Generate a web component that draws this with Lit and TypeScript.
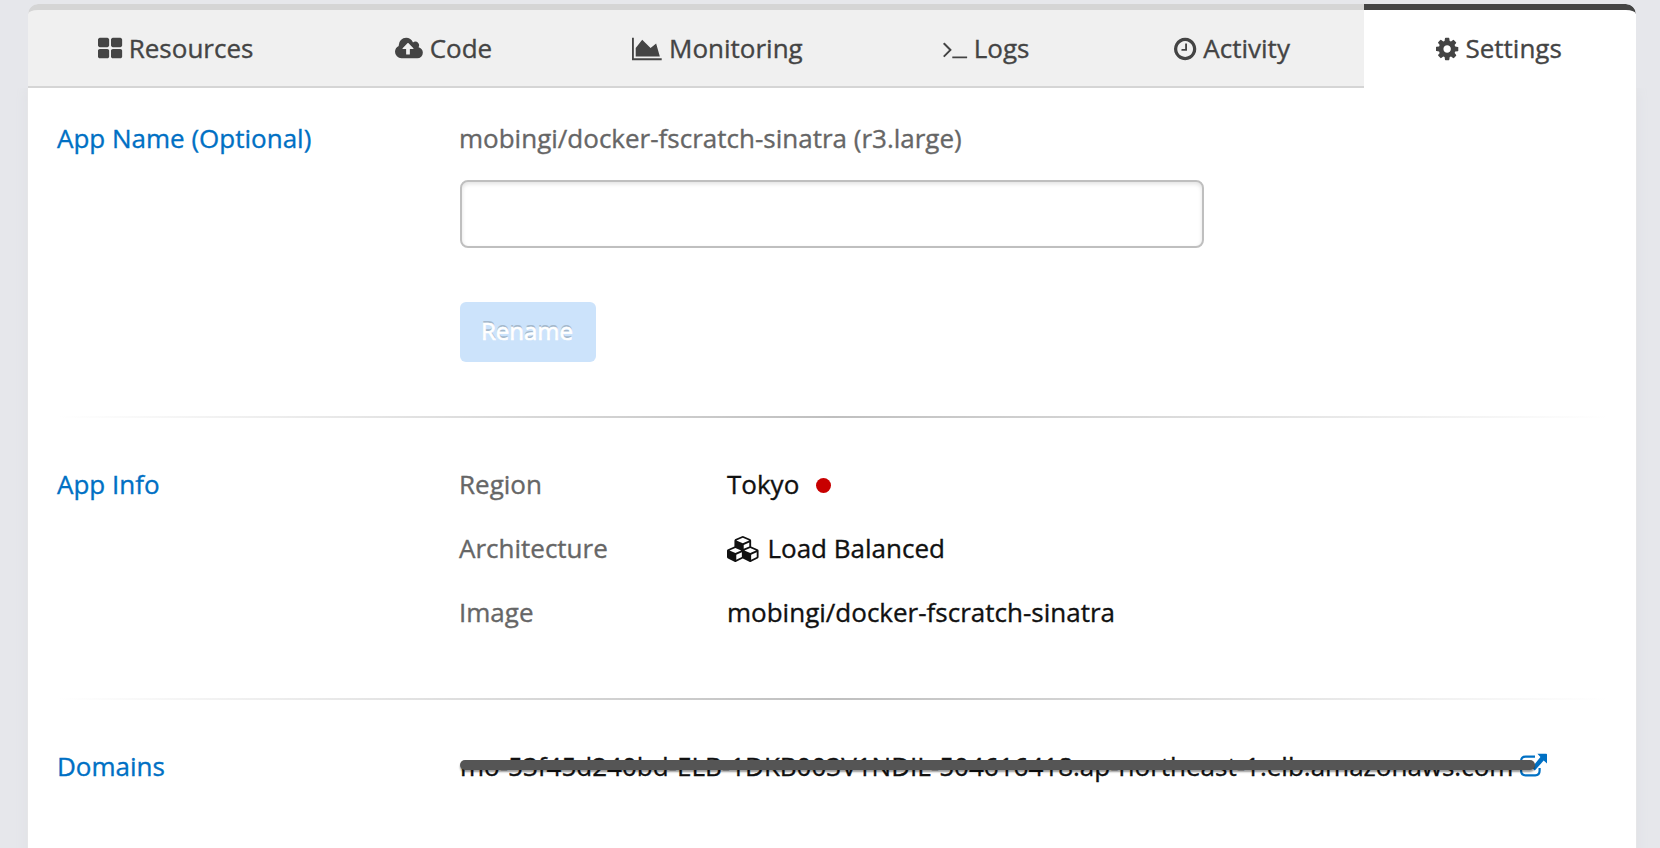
import { LitElement, html, css, svg } from "lit";
import { customElement } from "lit/decorators.js";

// Glyph outlines are stored in font units with the y axis pointing up.
const glyph = (name: string, w: number, units: number, em: number, d: unknown) =>
  html`<svg class="icon ${name}" viewBox="0 ${-units} ${w} ${em}" aria-hidden="true">
    <g transform="scale(1,-1)">${d}</g>
  </svg>`;

const thLarge = glyph("grid", 1664, 1536, 1792, svg`<path d="M768 512v-384q0 -52 -38 -90t-90 -38h-512q-52 0 -90 38t-38 90v384q0 52 38 90t90 38h512q52 0 90 -38t38 -90zM768 1280v-384q0 -52 -38 -90t-90 -38h-512q-52 0 -90 38t-38 90v384q0 52 38 90t90 38h512q52 0 90 -38t38 -90zM1664 512v-384q0 -52 -38 -90t-90 -38h-512q-52 0 -90 38t-38 90v384q0 52 38 90t90 38h512q52 0 90 -38t38 -90zM1664 1280v-384q0 -52 -38 -90t-90 -38h-512q-52 0 -90 38t-38 90v384q0 52 38 90t90 38h512q52 0 90 -38t38 -90z"/>`);
const cloudUpload = glyph("cloud", 1920, 1536, 1792, svg`<path d="M1280 672q0 14 -9 23l-352 352q-9 9 -23 9t-23 -9l-351 -351q-10 -12 -10 -24q0 -14 9 -23t23 -9h224v-352q0 -13 9.5 -22.5t22.5 -9.5h192q13 0 22.5 9.5t9.5 22.5v352h224q13 0 22.5 9.5t9.5 22.5zM1920 384q0 -159 -112.5 -271.5t-271.5 -112.5h-1088q-185 0 -316.5 131.5t-131.5 316.5q0 130 70 240t188 165q-2 30 -2 43q0 212 150 362t362 150q156 0 285.5 -87t188.5 -231q71 62 166 62q106 0 181 -75t75 -181q0 -76 -41 -138q130 -31 213.5 -135.5t83.5 -238.5z"/>`);
const areaChart = glyph("chart", 2048, 1536, 1792, svg`<path d="M2048 0v-128h-2048v1536h128v-1408h1920zM1664 1024l256 -896h-1664v576l448 576l576 -576z"/>`);
const terminal = glyph("terminal", 1664, 1536, 1792, svg`<path d="M585 553l-466 -466q-10 -10 -23 -10t-23 10l-50 50q-10 10 -10 23t10 23l393 393l-393 393q-10 10 -10 23t10 23l50 50q10 10 23 10t23 -10l466 -466q10 -10 10 -23t-10 -23zM1664 96v-64q0 -14 -9 -23t-23 -9h-960q-14 0 -23 9t-9 23v64q0 14 9 23t23 9h960q14 0 23 -9t9 -23z"/>`);
const clock = glyph("clock", 1536, 1536, 1792, svg`<path d="M896 992v-448q0 -14 -9 -23t-23 -9h-320q-14 0 -23 9t-9 23v64q0 14 9 23t23 9h224v352q0 14 9 23t23 9h64q14 0 23 -9t9 -23zM1312 640q0 148 -73 273t-198 198t-273 73t-273 -73t-198 -198t-73 -273t73 -273t198 -198t273 -73t273 73t198 198t73 273zM1536 640q0 -209 -103 -385.5t-279.5 -279.5t-385.5 -103t-385.5 103t-279.5 279.5t-103 385.5t103 385.5t279.5 279.5t385.5 103t385.5 -103t279.5 -279.5t103 -385.5z"/>`);
const gear = glyph("gear", 1536, 1536, 1792, svg`<path d="M1024 640q0 106 -75 181t-181 75t-181 -75t-75 -181t75 -181t181 -75t181 75t75 181zM1536 749v-222q0 -12 -8 -23t-20 -13l-185 -28q-19 -54 -39 -91q35 -50 107 -138q10 -12 10 -25t-9 -23q-27 -37 -99 -108t-94 -71q-12 0 -26 9l-138 108q-44 -23 -91 -38q-16 -136 -29 -186q-7 -28 -36 -28h-222q-14 0 -24.5 8.5t-11.5 21.5l-28 184q-49 16 -90 37l-141 -107q-10 -9 -25 -9q-14 0 -25 11q-126 114 -165 168q-7 10 -7 23q0 12 8 23q15 21 51 66.5t54 70.5q-27 50 -41 99l-183 27q-13 2 -21 12.5t-8 23.5v222q0 12 8 23t19 13l186 28q14 46 39 92q-40 57 -107 138q-10 12 -10 24q0 10 9 23q26 36 98.5 107.5t94.5 71.5q13 0 26 -10l138 -107q44 23 91 38q16 136 29 186q7 28 36 28h222q14 0 24.5 -8.5t11.5 -21.5l28 -184q49 -16 90 -37l142 107q9 9 24 9q13 0 25 -10q129 -119 165 -170q7 -8 7 -22q0 -12 -8 -23q-15 -21 -51 -66.5t-54 -70.5q26 -50 41 -98l183 -28q13 -2 21 -12.5t8 -23.5z"/>`);
const cubes = glyph("cubes", 2304, 1536, 1792, svg`<path d="M640 -96l384 192v314l-384 -164v-342zM576 358l404 173l-404 173l-404 -173zM1664 -96l384 192v314l-384 -164v-342zM1600 358l404 173l-404 173l-404 -173zM1152 651l384 165v266l-384 -164v-267zM1088 1030l441 189l-441 189l-441 -189zM2176 512v-416q0 -36 -19 -67t-52 -47l-448 -224q-25 -14 -57 -14t-57 14l-448 224q-5 2 -7 4q-2 -2 -7 -4l-448 -224q-25 -14 -57 -14t-57 14l-448 224q-33 16 -52 47t-19 67v416q0 38 21.5 70t56.5 48l434 186v400q0 38 21.5 70t56.5 48l448 192q23 10 50 10t50 -10l448 -192q35 -16 56.5 -48t21.5 -70v-400l434 -186q36 -16 57 -48t21 -70z"/>`);
const external = html`<svg class="icon external" viewBox="0 0 27 26" aria-hidden="true">
  <path d="M15 3.6H5.6Q1.1 3.6 1.1 8.1V17.8Q1.1 22.3 5.6 22.3H15.2Q19.6 22.3 19.6 17.8V15" fill="none" stroke="currentColor" stroke-width="2.2"/>
  <path d="M17.4 .7H26.2Q27 .7 27 1.5V10.6L23.7 7.6L14.8 17.4L11.8 14.8L20.4 4Z"/>
</svg>`;

const TABS = [
  { label: "Resources", icon: thLarge, size: "w-resources" },
  { label: "Code", icon: cloudUpload, size: "w-code" },
  { label: "Monitoring", icon: areaChart, size: "w-monitoring" },
  { label: "Logs", icon: terminal, size: "w-logs" },
  { label: "Activity", icon: clock, size: "w-activity" },
  { label: "Settings", icon: gear, size: "w-settings active" },
];

@customElement("app-root")
export class AppRoot extends LitElement {
  static styles = css`
    :host {
      display: block;
      box-sizing: border-box;
      height: 848px;
      overflow: hidden;
      padding: 4px 24px 0 28px;
      background: #e6e7eb;
      font: 26px/36px "Open Sans", sans-serif;
      color: #111;
      -webkit-text-stroke: 0.35px;
    }
    * { box-sizing: border-box; }
    .icon { display: inline-block; flex: none; height: 26px; margin-top: 1px; fill: currentColor; overflow: visible; }
    .tabs { display: flex; height: 84px; color: #444; border-radius: 10px 10px 0 0; overflow: hidden; }
    .tab {
      display: flex; align-items: center; justify-content: center; gap: 7px;
      padding-right: 1px;
      border-top: 6px solid #d5d5d5; border-bottom: 2px solid #d5d5d5; background: #f0f0f0;
      white-space: nowrap;
    }
    .tab:first-child { border-top-left-radius: 10px; }
    .active { border-top-color: #444; border-bottom: 0; padding: 0 2px 2px 0; background: #fff; border-top-right-radius: 10px; }
    .w-resources { width: 296px; }
    .w-code { width: 240px; }
    .w-monitoring { width: 308px; }
    .w-logs { width: 229px; }
    .w-activity { width: 263px; }
    .w-settings { width: 272px; }
    .panel { height: 780px; background: #fff; box-shadow: 0 0 0 1px #e6e6e8, 0 0 12px #dddee3; padding: 32px 28px 0 29px; clip-path: inset(0 -14px); }
    .section { display: grid; grid-template-columns: 402px 1fr; }
    .heading { margin: 0; font: inherit; color: #0070c4; }
    .muted { color: #666; }
    .field { display: block; width: 744px; height: 68px; margin: 24px 0 0 1px; border: 2px solid #bfbfbf; border-radius: 8px; background: #fff; box-shadow: inset 0 2px 4px #e2e2e2; }
    .rename { display: block; width: 136px; height: 60px; margin: 54px 0 0 1px; padding: 0 2px 3px 0; border: 0; border-radius: 6px; background: #cce3fb; color: #fff; font: 24px/36px "Open Sans", sans-serif; text-shadow: 0 -2px 0 #a5b9cc; -webkit-text-stroke: 0.7px #fff; }
    .rule { height: 2px; margin: 54px 0 48px; background: linear-gradient(90deg, transparent, #bfbfbf 50%, transparent); }
    .facts { display: grid; grid-template-columns: 268px 1fr; row-gap: 28px; margin: 0; }
    .facts dd { margin: 0; display: flex; align-items: center; }
    .dot { width: 15px; height: 15px; border-radius: 50%; background: #c80000; margin: 2px 0 0 17px; }
    .cubes { margin: 1px 7px 0 0; }
    .rule.second { margin: 68px 0 48px; }
    .domain { position: relative; display: flex; align-items: flex-start; white-space: nowrap; width: max-content; margin-left: 1px; }
    .external { width: 27px; height: 26px; margin: 5px 0 0 7px; color: #0070c4; }
    .strike { position: absolute; left: -0.5px; top: 12px; width: 1075px; height: 10px; border-radius: 5px; background: #555; box-shadow: 0 2px 2px #0006; }
  `;

  render() {
    return html`
      <nav class="tabs">
        ${TABS.map((t) => html`<div class="tab ${t.size}">${t.icon}<span>${t.label}</span></div>`)}
      </nav>
      <main class="panel">
        <section class="section">
          <h2 class="heading">App Name (Optional)</h2>
          <div>
            <div class="muted">mobingi/docker-fscratch-sinatra (r3.large)</div>
            <input class="field" type="text" aria-label="App name" />
            <button class="rename" type="button">Rename</button>
          </div>
        </section>
        <div class="rule"></div>
        <section class="section">
          <h2 class="heading">App Info</h2>
          <dl class="facts">
            <dt class="muted">Region</dt><dd>Tokyo<span class="dot"></span></dd>
            <dt class="muted">Architecture</dt><dd>${cubes}Load Balanced</dd>
            <dt class="muted">Image</dt><dd>mobingi/docker-fscratch-sinatra</dd>
          </dl>
        </section>
        <div class="rule second"></div>
        <section class="section">
          <h2 class="heading">Domains</h2>
          <div class="domain">
            <span>mo-53f45d240bd-ELB-1DKB003V1NDIL-504616418.ap-northeast-1.elb.amazonaws.com</span>
            ${external}
            <span class="strike"></span>
          </div>
        </section>
      </main>
    `;
  }
}
